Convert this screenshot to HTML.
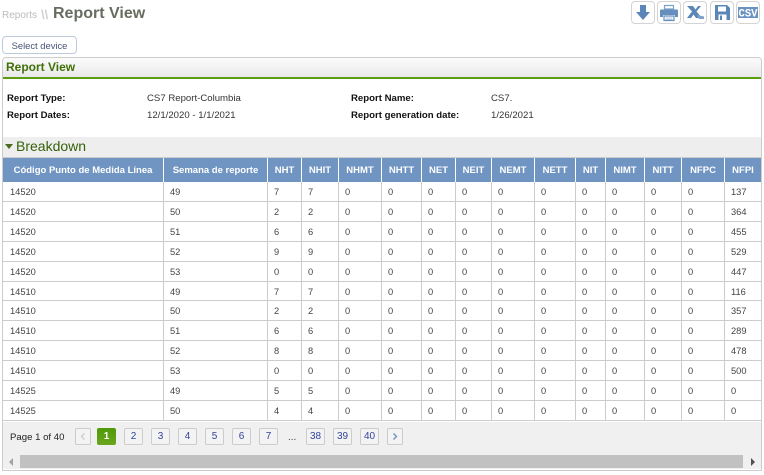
<!DOCTYPE html>
<html><head><meta charset="utf-8">
<style>
html,body{margin:0;padding:0;width:764px;height:475px;overflow:hidden;background:#fff;font-family:"Liberation Sans",sans-serif;}
.a{position:absolute;white-space:nowrap;}
.ib{position:absolute;top:1px;width:22px;height:21px;border:1px solid #d4d4d4;border-radius:4px;background:#fff;}
.ib svg{position:absolute;left:0;top:0;}
.lb{font-size:9.6px;font-weight:bold;color:#111;line-height:12px;}
.vl{font-size:9.6px;color:#333;line-height:12px;}
table{position:absolute;left:3px;top:158px;border-collapse:separate;border-spacing:0;table-layout:fixed;width:758px;font-size:9.3px;color:#444;}
th{background:#7095c3;color:#fff;font-size:9.5px;font-weight:bold;height:24px;padding:0;text-align:center;border-right:1px solid #fff;box-sizing:border-box;white-space:nowrap;overflow:hidden;}
th:last-child{border-right:0;}
td{height:20px;padding:1px 0 0 6px;box-sizing:border-box;border-right:1px solid #ccc;border-bottom:1px solid #ccc;background:#fff;white-space:nowrap;}
td:first-child{padding-left:7px;}
td:last-child{border-right:0;}
tr.s td{height:19px;}
.p{position:absolute;top:428px;height:15px;border:1px solid #ccc;border-radius:2px;background:#f3f3f3;box-sizing:content-box;text-align:center;font-size:10px;line-height:15px;color:#33449a;width:17px;}
</style></head>
<body>
<div class="a" style="left:2px;top:6px;font-size:10px;line-height:20px;color:#bbb;">Reports</div>
<div class="a" style="left:41px;top:5px;font-size:13px;font-weight:bold;line-height:20px;color:#d2d2d2;">\\</div>
<div class="a" style="left:53px;top:4px;font-size:16px;font-weight:bold;line-height:20px;color:#666d60;">Report View</div>

<div class="ib" style="left:631px;"><svg width="22" height="21" viewBox="0 0 22 21"><path d="M8 3h6v7h4l-7 8-7-8h4z" fill="#5b86b8"/></svg></div>
<div class="ib" style="left:657px;"><svg width="22" height="21" viewBox="0 0 22 21"><path d="M6.500 3.500h9v3.500h-9z" fill="none" stroke="#7fa2ca" stroke-width="1.200"/><path d="M3 7.500h16a1 1 0 0 1 1 1V15h-3v-2H5v2H2V8.500a1 1 0 0 1 1-1z" fill="#668fbd"/><path d="M6 14h10v4.500H6z" fill="#fff" stroke="#668fbd" stroke-width="1.200"/><path d="M7.500 16h7M7.500 17.500h7" stroke="#9db8d6" stroke-width=".7"/></svg></div>
<div class="ib" style="left:683px;"><svg width="22" height="21" viewBox="0 0 22 21"><path d="M3 4h6l2.500 3.500L14 4h3l-4.500 5.500L18 16h-6l-2.500-3.500L7 16H3l5-6.500z" fill="#5b86b8"/><path d="M13 13l7 1.500V17h-5z" fill="#7fa2ca"/></svg></div>
<div class="ib" style="left:710px;"><svg width="22" height="21" viewBox="0 0 22 21"><path d="M4 3h12l3 3v12H4z" fill="#5b86b8"/><path d="M7 4.500h8v5H7z" fill="#fff"/><path d="M7.500 12.500h8V18h-8z" fill="#fff"/><path d="M9 13.500h2V18H9z" fill="#5b86b8"/></svg></div>
<div class="ib" style="left:736px;"><svg width="22" height="21" viewBox="0 0 22 21"><rect x="1" y="5" width="20" height="11" fill="#6b93c2"/><text x="1.500" y="14.500" textLength="19" lengthAdjust="spacingAndGlyphs" font-family="Liberation Mono,monospace" font-weight="bold" font-size="11" fill="#fff">CSV</text></svg></div>

<div class="a" style="left:2px;top:36px;width:73px;height:16px;border:1px solid #bccbdc;border-radius:4px;background:#fff;text-align:center;font-size:9.4px;line-height:17px;color:#4a5378;">Select device</div>

<div class="a" style="left:2px;top:57px;width:758px;height:412px;border:1px solid #ccc;border-radius:4px 4px 0 0;background:#fff;"></div>
<div class="a" style="left:3px;top:58px;width:758px;height:19px;border-radius:3px 3px 0 0;background:linear-gradient(#fbfbfb,#e9e9e9);"></div>
<div class="a" style="left:3px;top:77px;width:758px;height:2px;background:#5c9e12;"></div>
<div class="a" style="left:6px;top:60px;font-size:12px;font-weight:bold;line-height:15px;color:#3f7008;">Report View</div>

<div class="a lb" style="left:7px;top:93px;">Report Type:</div>
<div class="a vl" style="left:147px;top:93px;">CS7 Report-Columbia</div>
<div class="a lb" style="left:351px;top:93px;">Report Name:</div>
<div class="a vl" style="left:491px;top:93px;">CS7.</div>
<div class="a lb" style="left:7px;top:110px;">Report Dates:</div>
<div class="a vl" style="left:147px;top:110px;">12/1/2020 - 1/1/2021</div>
<div class="a lb" style="left:351px;top:110px;">Report generation date:</div>
<div class="a vl" style="left:491px;top:110px;">1/26/2021</div>

<div class="a" style="left:3px;top:137px;width:758px;height:20px;background:#eee;"></div>
<div class="a" style="left:3px;top:157px;width:758px;height:1px;background:#ccc;"></div>
<div class="a" style="left:5px;top:144px;width:0;height:0;border-left:4px solid transparent;border-right:4px solid transparent;border-top:5px solid #4b6b1c;"></div>
<div class="a" style="left:16px;top:138px;font-size:14px;line-height:17px;color:#35620a;">Breakdown</div>

<table>
<colgroup><col style="width:161px"><col style="width:104px"><col style="width:34px"><col style="width:37px"><col style="width:43px"><col style="width:40px"><col style="width:34px"><col style="width:36px"><col style="width:43px"><col style="width:41px"><col style="width:30px"><col style="width:39px"><col style="width:37px"><col style="width:43px"><col style="width:36px"></colgroup>
<tr><th>Código Punto de Medida Línea</th><th>Semana de reporte</th><th>NHT</th><th>NHIT</th><th>NHMT</th><th>NHTT</th><th>NET</th><th>NEIT</th><th>NEMT</th><th>NETT</th><th>NIT</th><th>NIMT</th><th>NITT</th><th>NFPC</th><th>NFPI</th></tr>
<tr><td>14520</td><td>49</td><td>7</td><td>7</td><td>0</td><td>0</td><td>0</td><td>0</td><td>0</td><td>0</td><td>0</td><td>0</td><td>0</td><td>0</td><td>137</td></tr>
<tr><td>14520</td><td>50</td><td>2</td><td>2</td><td>0</td><td>0</td><td>0</td><td>0</td><td>0</td><td>0</td><td>0</td><td>0</td><td>0</td><td>0</td><td>364</td></tr>
<tr><td>14520</td><td>51</td><td>6</td><td>6</td><td>0</td><td>0</td><td>0</td><td>0</td><td>0</td><td>0</td><td>0</td><td>0</td><td>0</td><td>0</td><td>455</td></tr>
<tr><td>14520</td><td>52</td><td>9</td><td>9</td><td>0</td><td>0</td><td>0</td><td>0</td><td>0</td><td>0</td><td>0</td><td>0</td><td>0</td><td>0</td><td>529</td></tr>
<tr><td>14520</td><td>53</td><td>0</td><td>0</td><td>0</td><td>0</td><td>0</td><td>0</td><td>0</td><td>0</td><td>0</td><td>0</td><td>0</td><td>0</td><td>447</td></tr>
<tr class="s"><td>14510</td><td>49</td><td>7</td><td>7</td><td>0</td><td>0</td><td>0</td><td>0</td><td>0</td><td>0</td><td>0</td><td>0</td><td>0</td><td>0</td><td>116</td></tr>
<tr><td>14510</td><td>50</td><td>2</td><td>2</td><td>0</td><td>0</td><td>0</td><td>0</td><td>0</td><td>0</td><td>0</td><td>0</td><td>0</td><td>0</td><td>357</td></tr>
<tr><td>14510</td><td>51</td><td>6</td><td>6</td><td>0</td><td>0</td><td>0</td><td>0</td><td>0</td><td>0</td><td>0</td><td>0</td><td>0</td><td>0</td><td>289</td></tr>
<tr><td>14510</td><td>52</td><td>8</td><td>8</td><td>0</td><td>0</td><td>0</td><td>0</td><td>0</td><td>0</td><td>0</td><td>0</td><td>0</td><td>0</td><td>478</td></tr>
<tr><td>14510</td><td>53</td><td>0</td><td>0</td><td>0</td><td>0</td><td>0</td><td>0</td><td>0</td><td>0</td><td>0</td><td>0</td><td>0</td><td>0</td><td>500</td></tr>
<tr><td>14525</td><td>49</td><td>5</td><td>5</td><td>0</td><td>0</td><td>0</td><td>0</td><td>0</td><td>0</td><td>0</td><td>0</td><td>0</td><td>0</td><td>0</td></tr>
<tr><td>14525</td><td>50</td><td>4</td><td>4</td><td>0</td><td>0</td><td>0</td><td>0</td><td>0</td><td>0</td><td>0</td><td>0</td><td>0</td><td>0</td><td>0</td></tr>
</table>

<div class="a" style="left:3px;top:422px;width:758px;height:47px;background:#f0f0f0;"></div>
<div class="a" style="left:10px;top:431px;font-size:9.6px;line-height:14px;color:#222;">Page 1 of 40</div>
<div class="p" style="left:75px;width:14px;color:#bbb;"><svg width="14" height="15" viewBox="0 0 14 15" style="display:block"><path d="M8.500 4.500l-3 3 3 3" fill="none" stroke="#ccc" stroke-width="1.300"/></svg></div>
<div class="a" style="left:97px;top:428px;width:19px;height:17px;border-radius:2px;background:linear-gradient(#4f9a08,#6aa51e);color:#fff;font-size:10px;font-weight:bold;line-height:17px;text-align:center;">1</div>
<div class="p" style="left:124px;">2</div>
<div class="p" style="left:151px;">3</div>
<div class="p" style="left:178px;">4</div>
<div class="p" style="left:205px;">5</div>
<div class="p" style="left:232px;">6</div>
<div class="p" style="left:259px;">7</div>
<div class="a" style="left:288px;top:431px;font-size:10px;line-height:14px;color:#444;">...</div>
<div class="p" style="left:306px;">38</div>
<div class="p" style="left:333px;">39</div>
<div class="p" style="left:360px;">40</div>
<div class="p" style="left:387px;width:14px;"><svg width="14" height="15" viewBox="0 0 14 15" style="display:block"><path d="M5.500 4.500l3 3-3 3" fill="none" stroke="#6f8fc0" stroke-width="1.300"/></svg></div>

<div class="a" style="left:20px;top:455px;width:723px;height:13px;background:#c1c1c1;"></div>
<div class="a" style="left:9px;top:458px;width:0;height:0;border-top:4px solid transparent;border-bottom:4px solid transparent;border-right:4px solid #a3a3a3;"></div>
<div class="a" style="left:751px;top:458px;width:0;height:0;border-top:4px solid transparent;border-bottom:4px solid transparent;border-left:4px solid #505050;"></div>
</body></html>
